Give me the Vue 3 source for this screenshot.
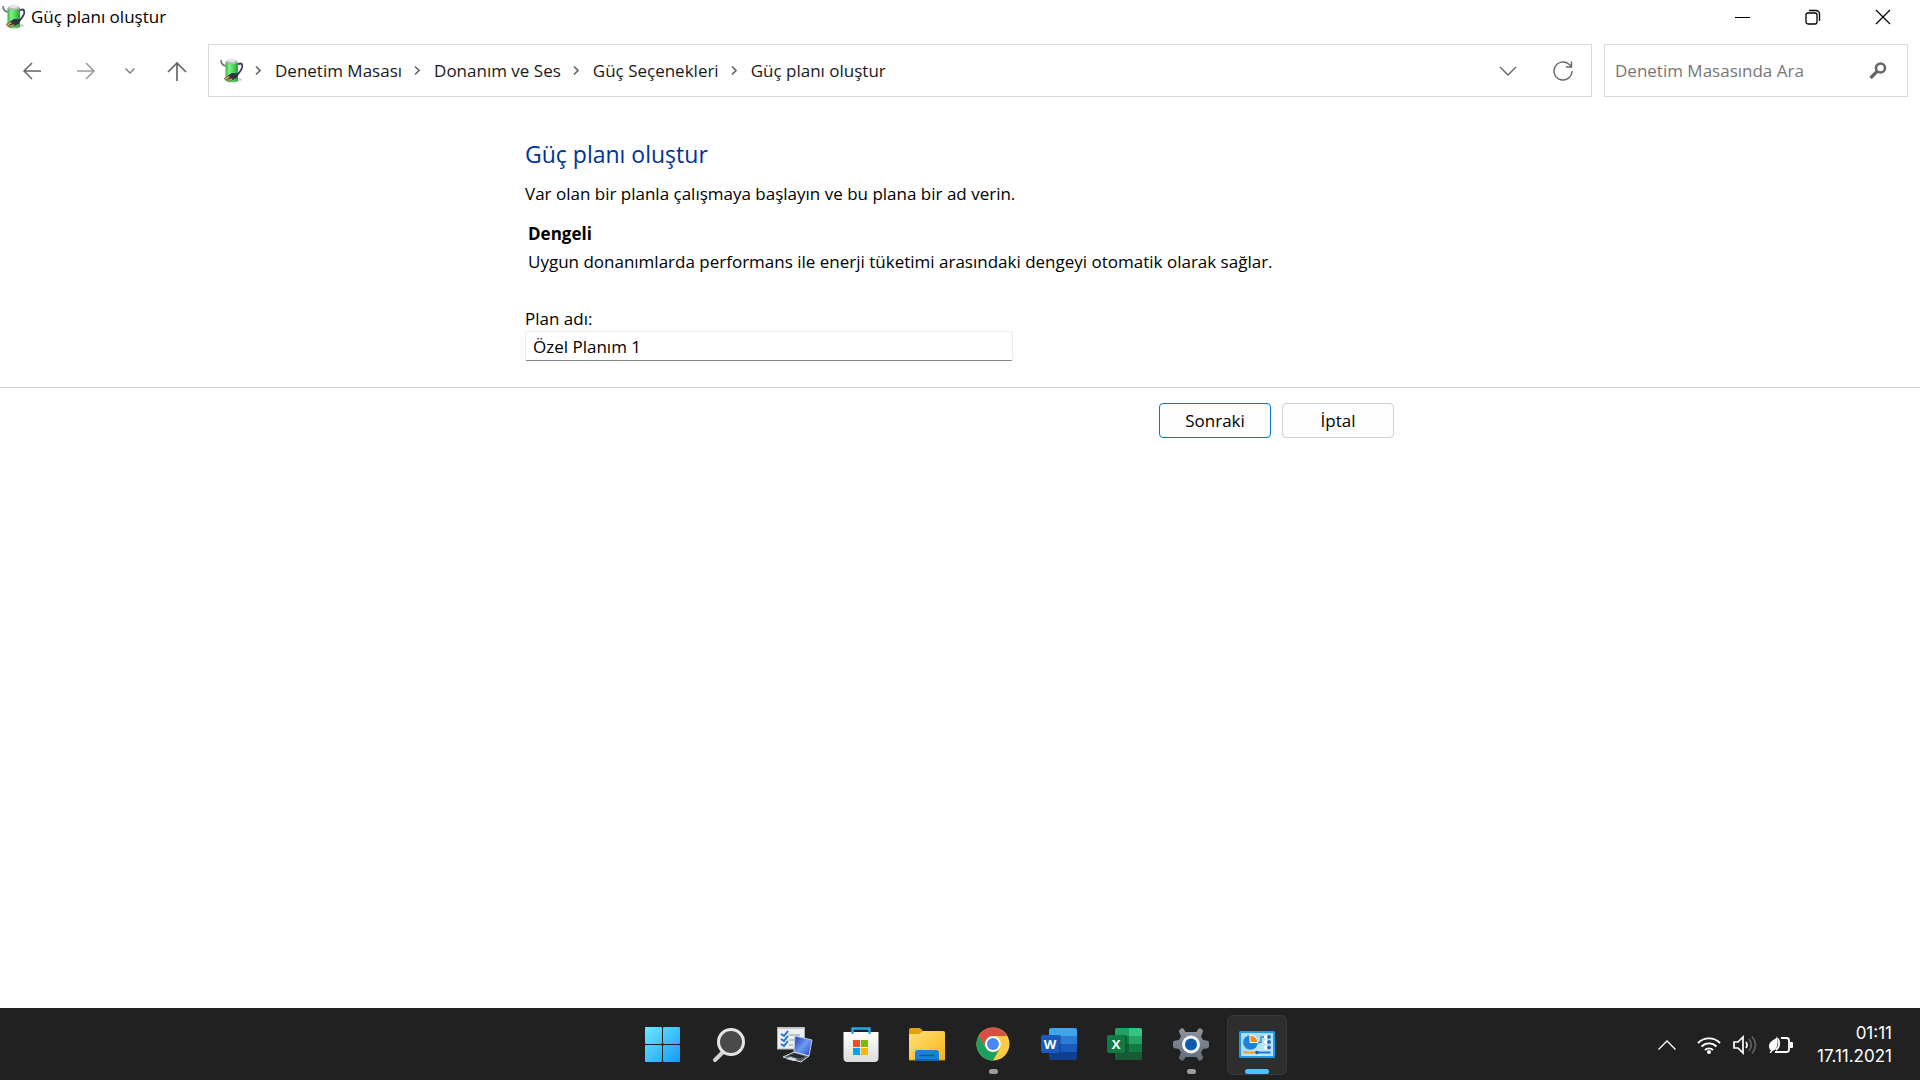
<script setup>
import { ref } from 'vue'

const planName = ref('Özel Planım 1')
const query = ref('')
const crumbs = ['Denetim Masası', 'Donanım ve Ses', 'Güç Seçenekleri', 'Güç planı oluştur']
</script>

<template>
  <div class="desktop">
    <svg class="defs" width="0" height="0" aria-hidden="true">
      <defs>
        <linearGradient id="cell" x1="0" x2="1" y1="0" y2="0">
          <stop offset="0" stop-color="#3fae45" />
          <stop offset=".3" stop-color="#7df283" />
          <stop offset=".6" stop-color="#4fd858" />
          <stop offset="1" stop-color="#2c9a37" />
        </linearGradient>
        <linearGradient id="win" gradientUnits="userSpaceOnUse" x1="0" y1="0" x2="35" y2="35">
          <stop offset="0" stop-color="#6ce9ff" />
          <stop offset="1" stop-color="#1599f5" />
        </linearGradient>
        <linearGradient id="folder" x1="0" y1="0" x2="1" y2="1">
          <stop offset="0" stop-color="#ffe07a" />
          <stop offset="1" stop-color="#f7b614" />
        </linearGradient>
        <linearGradient id="bag" x1="0" y1="0" x2="0" y2="1">
          <stop offset="0" stop-color="#ffffff" />
          <stop offset="1" stop-color="#dcdcdc" />
        </linearGradient>
        <linearGradient id="screen" x1="0" y1="0" x2="1" y2="1">
          <stop offset="0" stop-color="#1634b8" />
          <stop offset=".5" stop-color="#6f9af0" />
          <stop offset="1" stop-color="#1a44c8" />
        </linearGradient>
        <linearGradient id="gear" x1="0" y1="0" x2="0" y2="1">
          <stop offset="0" stop-color="#8d969f" />
          <stop offset="1" stop-color="#636d78" />
        </linearGradient>
        <symbol id="power" viewBox="0 0 24 26">
          <ellipse cx="16" cy="21.500" rx="6" ry="2" fill="#d5d5d5" />
          <path d="M1 2C1 5 3 7.500 6 8" fill="none" stroke="#6a7287" stroke-width="1.600" />
          <path d="M18 6.500c3.500-2.500 5 0 4 3.500-1 3-3 5-5 7" fill="none" stroke="#3b4258" stroke-width="1.900" />
          <path d="M5.500 4v18.500c1 2.500 11.500 2.500 12.500 0V4z" fill="url(#cell)" />
          <ellipse cx="11.800" cy="4" rx="6.200" ry="2.200" fill="#a9b9b2" />
          <ellipse cx="11.800" cy="2.500" rx="3.800" ry="1.900" fill="#dfe5e8" />
          <path d="M8 17.500l4-2.500 7 .5-2 4-5 3-4-1.500z" fill="#2e3342" />
          <path d="M4 20.500l4.500-2.500 2 1-4.500 3zM7.500 22.500l3.500-2.500 2 1-3.500 2.500z" fill="#d9ad68" stroke="#4a3a22" stroke-width=".6" />
        </symbol>
      </defs>
    </svg>

    <header class="titlebar">
      <svg class="app-icon" width="24" height="26"><use href="#power" /></svg>
      <span class="title">Güç planı oluştur</span>
      <div class="controls">
        <button type="button" aria-label="Simge durumuna küçült">
          <svg width="16" height="16"><path d="M0 8.500h15" stroke="#000" /></svg>
        </button>
        <button type="button" aria-label="Önceki boyut">
          <svg width="16" height="16" fill="none" stroke="#000" stroke-width="1.300">
            <rect x="1" y="4" width="11" height="11" rx="2" />
            <path d="M4 1.500h7a3.500 3.500 0 0 1 3.500 3.500v7" />
          </svg>
        </button>
        <button type="button" aria-label="Kapat">
          <svg width="16" height="16"><path d="M1 1l14 14M15 1L1 15" stroke="#000" stroke-width="1.200" /></svg>
        </button>
      </div>
    </header>

    <nav class="toolbar" aria-label="Gezinti">
      <button type="button" class="nav wide" aria-label="Geri">
        <svg width="20" height="20" fill="none" stroke="#666" stroke-width="1.500"><path d="M19 10H2M10 2L2 10l8 8" /></svg>
      </button>
      <button type="button" class="nav wide" aria-label="İleri">
        <svg width="20" height="20" fill="none" stroke="#999" stroke-width="1.500"><path d="M1 10h17M10 2l8 8-8 8" /></svg>
      </button>
      <button type="button" class="nav narrow" aria-label="Son konumlar">
        <svg width="10" height="8" fill="none" stroke="#777" stroke-width="1.300"><path d="M0.500 1.500L5 6l4.500-4.500" /></svg>
      </button>
      <button type="button" class="nav up" aria-label="Yukarı">
        <svg width="20" height="20" fill="none" stroke="#666" stroke-width="1.700"><path d="M10 20V2M1 11l9-9 9 9" /></svg>
      </button>
      <div class="address">
        <svg class="place" width="24" height="26"><use href="#power" /></svg>
        <ol class="crumbs">
          <li v-for="crumb in crumbs" :key="crumb">
            <svg width="7" height="11" fill="none" stroke="#666" stroke-width="1.700"><path d="M1 1.500l4 4-4 4" /></svg>
            <a href="#">{{ crumb }}</a>
          </li>
        </ol>
        <button type="button" class="tool" aria-label="Önceki konumlar">
          <svg width="18" height="10" fill="none" stroke="#666" stroke-width="1.400"><path d="M1 1l8 8 8-8" /></svg>
        </button>
        <button type="button" class="tool" aria-label="Yenile">
          <svg width="20" height="20" fill="none" stroke="#666" stroke-width="1.400">
            <path d="M19 10a9 9 0 1 1-3-6.700L18 5M18.500 0.500V6H13" />
          </svg>
        </button>
      </div>
      <label class="search">
        <input v-model="query" type="text" placeholder="Denetim Masasında Ara" aria-label="Denetim Masasında Ara" />
        <svg width="18" height="18" fill="none" stroke="#666">
          <circle cx="11.500" cy="6" r="4.500" stroke-width="2.600" />
          <path d="M8 9.500L1.500 16" stroke-width="3.200" />
        </svg>
      </label>
    </nav>

    <main>
      <form @submit.prevent>
        <section class="column">
          <h1>Güç planı oluştur</h1>
          <p class="intro">Var olan bir planla çalışmaya başlayın ve bu plana bir ad verin.</p>
          <div class="plan">
            <h2>Dengeli</h2>
            <p>Uygun donanımlarda performans ile enerji tüketimi arasındaki dengeyi otomatik olarak sağlar.</p>
          </div>
          <label class="field-label" for="plan-name">Plan adı:</label>
          <input id="plan-name" v-model="planName" class="field" type="text" />
        </section>
        <footer class="actions">
          <div class="column buttons">
            <button type="submit" class="push primary">Sonraki</button>
            <button type="button" class="push">İptal</button>
          </div>
        </footer>
      </form>
    </main>

    <footer class="taskbar">
      <div class="side"></div>
      <div class="apps">
        <button type="button" aria-label="Başlat">
          <svg width="36" height="36" fill="url(#win)">
            <rect width="17" height="17" rx="1" /><rect x="18" width="17" height="17" rx="1" />
            <rect y="18" width="17" height="17" rx="1" /><rect x="18" y="18" width="17" height="17" rx="1" />
          </svg>
        </button>
        <button type="button" aria-label="Ara">
          <svg width="36" height="36">
            <path d="M12 25l-8 8" stroke="#cfd3d3" stroke-width="4" stroke-linecap="round" />
            <circle cx="20" cy="15" r="12.500" fill="#4a4a4a" stroke="#e4e6e6" stroke-width="3" />
          </svg>
        </button>
        <button type="button" aria-label="Görevler">
          <svg width="36" height="36">
            <rect x="0.500" y="0" width="27" height="22" fill="#eceff1" stroke="#aeb3b6" />
            <path d="M1 1h26" stroke="#c0c5c8" stroke-width="2" />
            <path d="M12 8h11M12 13h5M12 18h4" stroke="#bcc2c6" stroke-width="2" />
            <path d="M4 7l3 2 4-5M4 12l3 2 4-5M4 17l3 2 4-5" fill="none" stroke="#1d74cc" stroke-width="2" />
            <path d="M18 9l17 4-3 16-15-4z" fill="url(#screen)" stroke="#bfc9dc" />
            <path d="M17 25l15 4-8 6-18-5z" fill="#596066" stroke="#d7dbde" />
            <path d="M16 27l11 3M13 28l11 3" stroke="#202428" stroke-width="1.500" />
            <path d="M13 30l7 2-3 2-8-2z" fill="#d9dddf" />
          </svg>
        </button>
        <button type="button" aria-label="Mağaza">
          <svg width="36" height="36">
            <path d="M0.500 5h35v26a4 4 0 0 1-4 4h-27a4 4 0 0 1-4-4z" fill="url(#bag)" />
            <path d="M9.500 7V1.500h17V7" fill="none" stroke="#28a8ea" stroke-width="2.400" />
            <path fill="#f25022" d="M10 13h7v7h-7z" /><path fill="#7fba00" d="M18 13h7v7h-7z" />
            <path fill="#00a4ef" d="M10 21h7v7h-7z" /><path fill="#ffb900" d="M18 21h7v7h-7z" />
          </svg>
        </button>
        <button type="button" aria-label="Dosya Gezgini">
          <svg width="36" height="36">
            <path d="M0 3a2 2 0 0 1 2-2h9l4 4v6H0z" fill="#e3a008" />
            <path d="M0 7h10l4-3h20a2 2 0 0 1 2 2v27H0z" fill="url(#folder)" />
            <path d="M6 34V26a3 3 0 0 1 3-3h18a3 3 0 0 1 3 3v8z" fill="#1583d6" />
            <path d="M11 28.500h14" stroke="#0b579b" stroke-width="1.500" stroke-linecap="round" />
            <path d="M0 33h36" stroke="#d89a0c" />
            <path d="M6 33h24" stroke="#0d65b4" stroke-width="2" />
          </svg>
        </button>
        <button type="button" class="running" aria-label="Chrome">
          <svg width="36" height="36">
            <circle cx="18" cy="17" r="16.500" fill="#ffcb42" />
            <path d="M3.700 8.800A16.500 16.500 0 0 1 32.300 9H18a8 8 0 0 0-7 12z" fill="#d85045" />
            <path d="M3.700 8.800A16.500 16.500 0 0 0 18 33.500l7-12.500a8 8 0 0 1-14 0z" fill="#1ba15f" />
            <circle cx="18" cy="17" r="7.800" fill="#fff" /><circle cx="18" cy="17" r="6" fill="#4688f4" />
          </svg>
        </button>
        <button type="button" aria-label="Word">
          <svg width="36" height="36">
            <path fill="#41a5ee" d="M10 1h24a2 2 0 0 1 2 2v6H8V3a2 2 0 0 1 2-2z" />
            <path fill="#2b7cd3" d="M8 9h28v8H8z" /><path fill="#185abd" d="M8 17h28v8H8z" />
            <path fill="#103f91" d="M8 25h28v6a2 2 0 0 1-2 2H10a2 2 0 0 1-2-2z" />
            <path fill="#123f8c" d="M8 8h12v19H8z" opacity=".5" />
            <rect y="8" width="18" height="18" rx="2" fill="#185abd" />
            <text class="letter" x="9" y="22" text-anchor="middle">W</text>
          </svg>
        </button>
        <button type="button" aria-label="Excel">
          <svg width="36" height="36">
            <path fill="#21a366" d="M10 1h12v8H8V3a2 2 0 0 1 2-2z" />
            <path fill="#33c481" d="M22 1h11a2 2 0 0 1 2 2v6H22z" />
            <path fill="#107c41" d="M8 9h14v16H8z" /><path fill="#21a366" d="M22 9h13v8H22z" />
            <path fill="#107c41" d="M22 17h13v8H22z" />
            <path fill="#185c37" d="M8 17h14v8h13v6a2 2 0 0 1-2 2H10a2 2 0 0 1-2-2z" />
            <path fill="#0c4f2b" d="M8 8h12v19H8z" opacity=".5" />
            <rect y="8" width="18" height="18" rx="2" fill="#107c41" />
            <text class="letter" x="9" y="22" text-anchor="middle">X</text>
          </svg>
        </button>
        <button type="button" class="running" aria-label="Ayarlar">
          <svg width="36" height="36">
            <path
              d="M12.500 5L11 2.500Q10 .5 8 1.500L6.500 3Q5.500 4 6.300 5.500L8 9.500 6 13 1.500 13.800Q0 14 0 16v3q0 2 1.500 2.200L6 22l2 3.500-1.700 4Q5.500 31 6.500 32l1.500 1.300q2 1.200 3-.8L12.500 30h11l1.500 2.500q1 2 3 .8l1.500-1.300q1-1 .2-2.500l-1.700-4 2-3.500 4.500-.8Q36 21 36 19v-3q0-2-1.500-2.200L30 13l-2-3.500 1.700-4Q30.500 4 29.500 3L28 1.500q-2-1-3 1L23.500 5z"
              fill="url(#gear)" />
            <circle cx="18" cy="17.500" r="9" fill="#f1f3f5" /><circle cx="18" cy="17.500" r="6" fill="#0b5cad" />
          </svg>
        </button>
        <button type="button" class="active" aria-label="Denetim Masası">
          <svg width="36" height="36">
            <rect y="4" width="36" height="27" rx="1.500" fill="#1d9be6" />
            <rect x="2" y="6" width="32" height="23" fill="#a9dcf7" />
            <path d="M2 29L34 6v23z" fill="#c3e8fb" opacity=".6" />
            <circle cx="11.500" cy="15.500" r="7.300" fill="#1c84d6" />
            <path d="M11 15.500V8a8 8 0 0 1 8 7.500z" fill="#f68f10" stroke="#fff" />
            <path d="M19 15.500h3V10h3" fill="none" stroke="#3b83b8" stroke-width="1.300" />
            <g fill="#fff"><rect x="25" y="8" width="7" height="4" rx="2" /><rect x="25" y="13" width="7" height="4" rx="2" /><rect x="25" y="18.500" width="7" height="4" rx="2" /></g>
            <g fill="#1671c4"><circle cx="30" cy="10" r="2" /><circle cx="30" cy="15" r="2" /><circle cx="30" cy="20.500" r="2" /></g>
            <path d="M4.500 25.500h12" stroke="#f59a1b" stroke-width="2" /><path d="M18 25.500h13.500" stroke="#1a7ccd" stroke-width="2" />
            <circle cx="18" cy="25.500" r="1.800" fill="#1263af" />
          </svg>
        </button>
      </div>
      <div class="side tray">
        <button type="button" class="more" aria-label="Gizli simgeleri göster">
          <svg width="18" height="10" fill="none" stroke="#fff" stroke-width="1.300"><path d="M0.500 9.500L9 1l8.500 8.500" /></svg>
        </button>
        <button type="button" class="status" aria-label="Hızlı ayarlar">
          <svg width="24" height="20" fill="none" stroke="#fff" stroke-width="1.900">
            <path d="M1 8a15.500 15.500 0 0 1 22 0M4.500 11.500a10.500 10.500 0 0 1 15 0M8 15a5.700 5.700 0 0 1 8 0" />
            <circle cx="12" cy="17" r="2" fill="#fff" stroke="none" />
          </svg>
          <svg width="24" height="20" fill="none" stroke="#fff" stroke-width="1.700">
            <path d="M1 7h4l5-5v16l-5-5H1zM13 7q2 3 0 6" />
            <path d="M16 4q4.500 6 0 12M19 1.500q7 8.500 0 17" stroke="#606060" />
          </svg>
          <svg width="24" height="20" fill="none" stroke="#fff" stroke-width="1.800">
            <path d="M12 3h5.500a2.500 2.500 0 0 1 2.500 2.500v9a2.500 2.500 0 0 1-2.500 2.500H6" />
            <path d="M21 7h2a1 1 0 0 1 1 1v4a1 1 0 0 1-1 1h-2z" fill="#fff" stroke="none" />
            <path d="M8 1C8 5 0 5 0 11c0 2 .7 3.500 2 4.500L.5 18H2l1.500-2C8.500 15 9.500 8 8 1z" fill="#fff" stroke="none" />
            <path d="M9 3.500c2 4.500 1.500 8.500-2 11.500" />
          </svg>
        </button>
        <div class="clock"><time>01:11</time><time>17.11.2021</time></div>
      </div>
    </footer>
  </div>
</template>

<style>
body {
  margin: 0;
  background: #fff;
}
</style>

<style scoped>
* {
  box-sizing: border-box;
}
.desktop {
  display: flex;
  flex-direction: column;
  min-height: 100vh;
  font: 17px/24px "Open Sans", "Noto Sans", sans-serif;
  color: #000;
}
.defs {
  position: absolute;
}
button,
input {
  font: inherit;
  color: inherit;
  margin: 0;
  padding: 0;
  border: 0;
  background: none;
}
button {
  display: flex;
  align-items: center;
  justify-content: center;
}
svg {
  display: block;
  flex: none;
}
.titlebar {
  display: flex;
  align-items: center;
  height: 34px;
  padding: 0 2px;
}
.title {
  flex: 1;
  margin-left: 5px;
}
.controls {
  display: flex;
}
.controls button {
  width: 70px;
  height: 34px;
}
.toolbar {
  display: flex;
  align-items: center;
  padding: 10px 12px 0 5px;
}
.nav {
  height: 40px;
}
.wide {
  width: 54px;
}
.narrow {
  width: 34px;
}
.up {
  width: 60px;
}
.address,
.search {
  display: flex;
  align-items: center;
  height: 53px;
  border: 1px solid #d9d9d9;
}
.address {
  flex: 1;
  margin: 0 12px 0 1px;
  padding: 0 1px 0 11px;
}
.crumbs {
  display: flex;
  flex: 1;
  margin: 0;
  padding: 0 0 0 11px;
  list-style: none;
}
.crumbs li {
  display: flex;
  align-items: center;
  gap: 13px;
  margin-right: 12px;
}
.crumbs a {
  color: #191919;
  text-decoration: none;
}
.tool {
  width: 55px;
  height: 40px;
}
.search {
  width: 304px;
  padding: 0 20px 0 10px;
}
.search input {
  flex: 1;
  min-width: 0;
  outline: 0;
}
.search input::placeholder {
  color: #767676;
  opacity: 1;
}
main {
  flex: 1;
}
.column {
  width: 100%;
  max-width: 870px;
  margin: 0 auto;
}
section.column {
  padding: 41px 0 26px;
}
h1,
h2,
p {
  margin: 0;
}
h1 {
  font-size: 23px;
  font-weight: 400;
  line-height: 32px;
  color: #003399;
}
.intro {
  margin-top: 12px;
}
.plan {
  margin: 16px 0 33px;
  padding-left: 3px;
}
h2 {
  margin-bottom: 4px;
  font-size: 17px;
  font-weight: 700;
}
.field-label {
  display: block;
}
.field {
  display: block;
  width: 488px;
  height: 30px;
  padding: 0 7px;
  border: 1px solid #ececec;
  border-bottom-color: #868686;
  border-radius: 2px;
  outline: 0;
}
.actions {
  border-top: 1px solid #cccccc;
  padding-top: 15px;
}
.buttons {
  display: flex;
  justify-content: flex-end;
  gap: 11px;
  padding-right: 1px;
}
.push {
  width: 112px;
  height: 35px;
  border: 1px solid #d0d0d0;
  border-radius: 4px;
  background: #fdfdfd;
}
.primary {
  border-color: #0078d4;
}
.taskbar {
  display: flex;
  align-items: center;
  height: 72px;
  padding-top: 2px;
  background: #212121;
  color: #fff;
}
.side {
  flex: 1 1 300px;
}
.apps {
  display: flex;
  gap: 6px;
}
.apps button {
  position: relative;
  width: 60px;
  height: 60px;
  border-radius: 6px;
}
.apps .active {
  background: #2e2e2e;
  border: 1px solid #393939;
}
.running::after,
.active::after {
  content: "";
  position: absolute;
  bottom: 1px;
  width: 9px;
  height: 5px;
  border-radius: 3px;
  background: #9c9c9c;
}
.active::after {
  bottom: 0;
  width: 24px;
  background: #4cc2ff;
}
.letter {
  font: 700 13px "Open Sans", sans-serif;
  fill: #fff;
}
.tray {
  display: flex;
  align-items: center;
  justify-content: flex-end;
  padding-right: 28px;
}
.more {
  width: 36px;
  height: 60px;
}
.status {
  gap: 12px;
  height: 60px;
  padding: 0 24px 0 12px;
}
.clock {
  display: flex;
  flex-direction: column;
  align-items: flex-end;
  font: 17px/23px Inter, sans-serif;
}
</style>
